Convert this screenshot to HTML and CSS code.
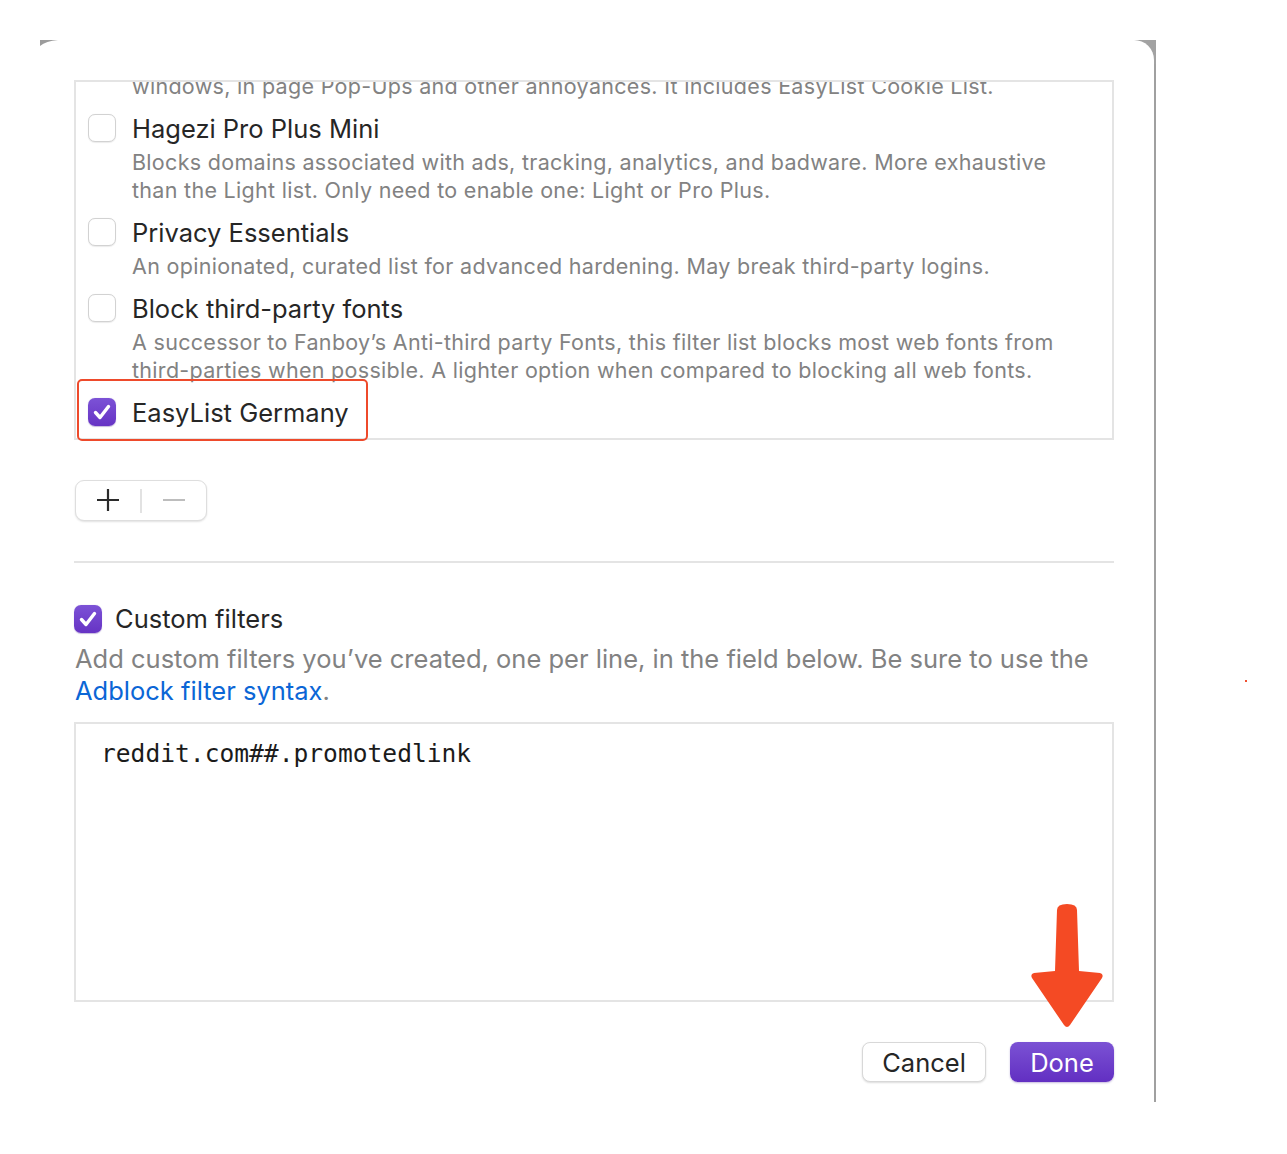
FILE: index.html
```html
<!DOCTYPE html>
<html lang="en">
<head>
<meta charset="utf-8">
<title>Filter lists</title>
<link rel="stylesheet" href="styles.css">
</head>
<body>
<div class="frame">
  <svg class="corner-tl" width="20" height="8" viewBox="0 0 20 8"><path d="M0 0 H18 Q6 1 0 6 Z" fill="#9c9c9c"/></svg>
  <div class="window">
    <div class="list-wrap">
      <div class="list-box">
        <div class="list-inner">
          <div class="item item-cut">
            <div class="item-text">
              <div class="desc">windows, in page Pop-Ups and other annoyances. It includes EasyList Cookie List.</div>
            </div>
          </div>
          <div class="item">
            <span class="cb"></span>
            <div class="item-text">
              <div class="title">Hagezi Pro Plus Mini</div>
              <div class="desc">Blocks domains associated with ads, tracking, analytics, and badware. More exhaustive<br>than the Light list. Only need to enable one: Light or Pro Plus.</div>
            </div>
          </div>
          <div class="item">
            <span class="cb"></span>
            <div class="item-text">
              <div class="title">Privacy Essentials</div>
              <div class="desc">An opinionated, curated list for advanced hardening. May break third-party logins.</div>
            </div>
          </div>
          <div class="item">
            <span class="cb"></span>
            <div class="item-text">
              <div class="title">Block third-party fonts</div>
              <div class="desc">A successor to Fanboy’s Anti-third party Fonts, this filter list blocks most web fonts from<br>third-parties when possible. A lighter option when compared to blocking all web fonts.</div>
            </div>
          </div>
          <div class="item">
            <span class="cb cb-on"><svg viewBox="0 0 28 28" width="28" height="28"><path d="M7.5 14.5 L12 19.5 L20.5 8.5" fill="none" stroke="#fff" stroke-width="3.4" stroke-linecap="round" stroke-linejoin="round"/></svg></span>
            <div class="item-text">
              <div class="title">EasyList Germany</div>
            </div>
          </div>
        </div>
      </div>
      <div class="highlight"></div>
    </div>

    <div class="seg">
      <span class="seg-btn seg-plus"><svg width="24" height="24" viewBox="0 0 24 24"><path d="M12 1 V23 M1 12 H23" stroke="#2b2b2b" stroke-width="2.2"/></svg></span>
      <span class="seg-sep"></span>
      <span class="seg-btn seg-minus"><svg width="24" height="24" viewBox="0 0 24 24"><path d="M1 12 H23" stroke="#bdbdbd" stroke-width="2"/></svg></span>
    </div>

    <div class="rule"></div>

    <div class="custom-row">
      <span class="cb cb-on"><svg viewBox="0 0 28 28" width="28" height="28"><path d="M7.5 14.5 L12 19.5 L20.5 8.5" fill="none" stroke="#fff" stroke-width="3.4" stroke-linecap="round" stroke-linejoin="round"/></svg></span>
      <span class="custom-title">Custom filters</span>
    </div>
    <p class="custom-desc">Add custom filters you’ve created, one per line, in the field below. Be sure to use the<br><a class="link" href="#">Adblock filter syntax</a>.</p>

    <div class="editor">reddit.com##.promotedlink</div>

    <div class="actions">
      <button class="btn btn-cancel">Cancel</button>
      <button class="btn btn-done">Done</button>
    </div>

    <svg class="arrow" width="74" height="130" viewBox="0 0 74 130"><path d="M27 10 Q27 4 37 4 Q47 4 47 10 L49 71 L70 73 Q74 74 72 78 L40 125 Q37 129 34 125 L2 78 Q0 74 4 73 L25 71 Z" fill="#f44a24"/></svg>
  </div>
</div>
<span class="dot"></span>
</body>
</html>
```

FILE: styles.css
```css
html, body {
  margin: 0;
  padding: 0;
  background: #ffffff;
}
body {
  font-family: Inter, "Noto Sans", "Liberation Sans", sans-serif;
  color: #262626;
  width: 1287px;
  height: 1154px;
  position: relative;
  overflow: hidden;
}
.frame {
  position: relative;
  margin: 40px 0 0 40px;
  width: 1116px;
  height: 1072px;
  background:
    linear-gradient(#a2a2a2, #a2a2a2) no-repeat right top / 24px 24px,
    linear-gradient(#a0a0a0, #a0a0a0) no-repeat right top / 2px 1062px;
}
.corner-tl {
  position: absolute;
  left: 0;
  top: 0;
  z-index: 2;
}
.window {
  position: relative;
  width: 1114px;
  height: 1072px;
  box-sizing: border-box;
  background: #fff;
  border-top-right-radius: 20px;
  border-bottom-right-radius: 14px;
  padding: 40px 40px 0 34px;
}
.list-wrap {
  position: relative;
}
.list-box {
  height: 360px;
  box-sizing: border-box;
  border: 2px solid #e4e4e4;
  overflow: hidden;
}
.list-inner {
  margin-top: -10px;
  padding-left: 12px;
  display: flex;
  flex-direction: column;
  gap: 13px;
}
.item {
  display: flex;
  align-items: flex-start;
  gap: 16px;
}
.item-cut {
  padding-left: 44px;
}
.item-text {
  display: flex;
  flex-direction: column;
}
.title {
  font-size: 25.5px;
  line-height: 32px;
  color: #262626;
}
.title + .desc {
  margin-top: 3px;
}
.desc {
  font-size: 21.5px;
  line-height: 28px;
  color: #828282;
  letter-spacing: 0.3px;
}
.cb {
  flex: none;
  width: 28px;
  height: 28px;
  box-sizing: border-box;
  border-radius: 7px;
  border: 1px solid #d2d2d2;
  background: #fff;
  box-shadow: 0 0.5px 1px rgba(0,0,0,0.08);
  margin-top: 1px;
  display: flex;
}
.cb-on {
  border: none;
  background: linear-gradient(#7c52d6, #6633c4);
  box-shadow: 0 0.5px 1px rgba(60,20,140,0.3);
}
.highlight {
  position: absolute;
  left: 3px;
  top: 299px;
  width: 291px;
  height: 62px;
  box-sizing: border-box;
  border: 2px solid #ee4a2b;
  border-radius: 5px;
}
.seg {
  margin-top: 40px;
  margin-left: 1px;
  width: 132px;
  height: 41px;
  box-sizing: border-box;
  border-radius: 9px;
  background: #fff;
  border: 1px solid #dedede;
  box-shadow: 0 1px 2px rgba(0,0,0,0.12);
  display: flex;
  align-items: center;
}
.seg-btn {
  width: 64px;
  display: flex;
  justify-content: center;
}
.seg-plus { width: 64px; padding-left: 0; margin-top: -2px; }
.seg-sep {
  width: 2px;
  height: 24px;
  background: #e2e2e2;
}
.seg-minus { width: 64px; margin-top: -2px; }
.rule {
  margin-top: 40px;
  height: 2px;
  background: #e4e4e4;
}
.custom-row {
  margin-top: 40px;
  display: flex;
  align-items: center;
  gap: 13px;
  height: 32px;
}
.custom-row .cb { margin-top: 0; }
.custom-title {
  font-size: 25.5px;
  line-height: 32px;
  color: #262626;
}
.custom-desc {
  margin: 8px 0 0 1px;
  font-size: 25.5px;
  line-height: 32px;
  color: #828282;
}
.link {
  color: #0b66d6;
  text-decoration: none;
}
.editor {
  margin-top: 15px;
  height: 280px;
  box-sizing: border-box;
  border: 2px solid #e4e4e4;
  padding: 15px 25px;
  font-family: "DejaVu Sans Mono", "Liberation Mono", monospace;
  font-size: 24.6px;
  line-height: 30px;
  color: #1b1b1b;
}
.actions {
  margin-top: 40px;
  display: flex;
  justify-content: flex-end;
  gap: 24px;
}
.btn {
  height: 40px;
  border-radius: 8px;
  font-family: Inter, "Noto Sans", "Liberation Sans", sans-serif;
  font-size: 25.5px;
  padding: 0;
  cursor: pointer;
}
.btn-cancel {
  width: 124px;
  background: #fff;
  color: #262626;
  border: 1px solid #d8d8d8;
  box-shadow: 0 1px 2px rgba(0,0,0,0.14);
}
.btn-done {
  width: 104px;
  color: #fff;
  border: none;
  background: linear-gradient(#7b52d4, #622fc2);
  box-shadow: 0 1px 2px rgba(60,20,140,0.3);
}
.arrow {
  position: absolute;
  left: 990px;
  top: 860px;
}
.dot {
  position: absolute;
  left: 1245px;
  top: 680px;
  width: 2px;
  height: 2px;
  background: #f05030;
}
```
